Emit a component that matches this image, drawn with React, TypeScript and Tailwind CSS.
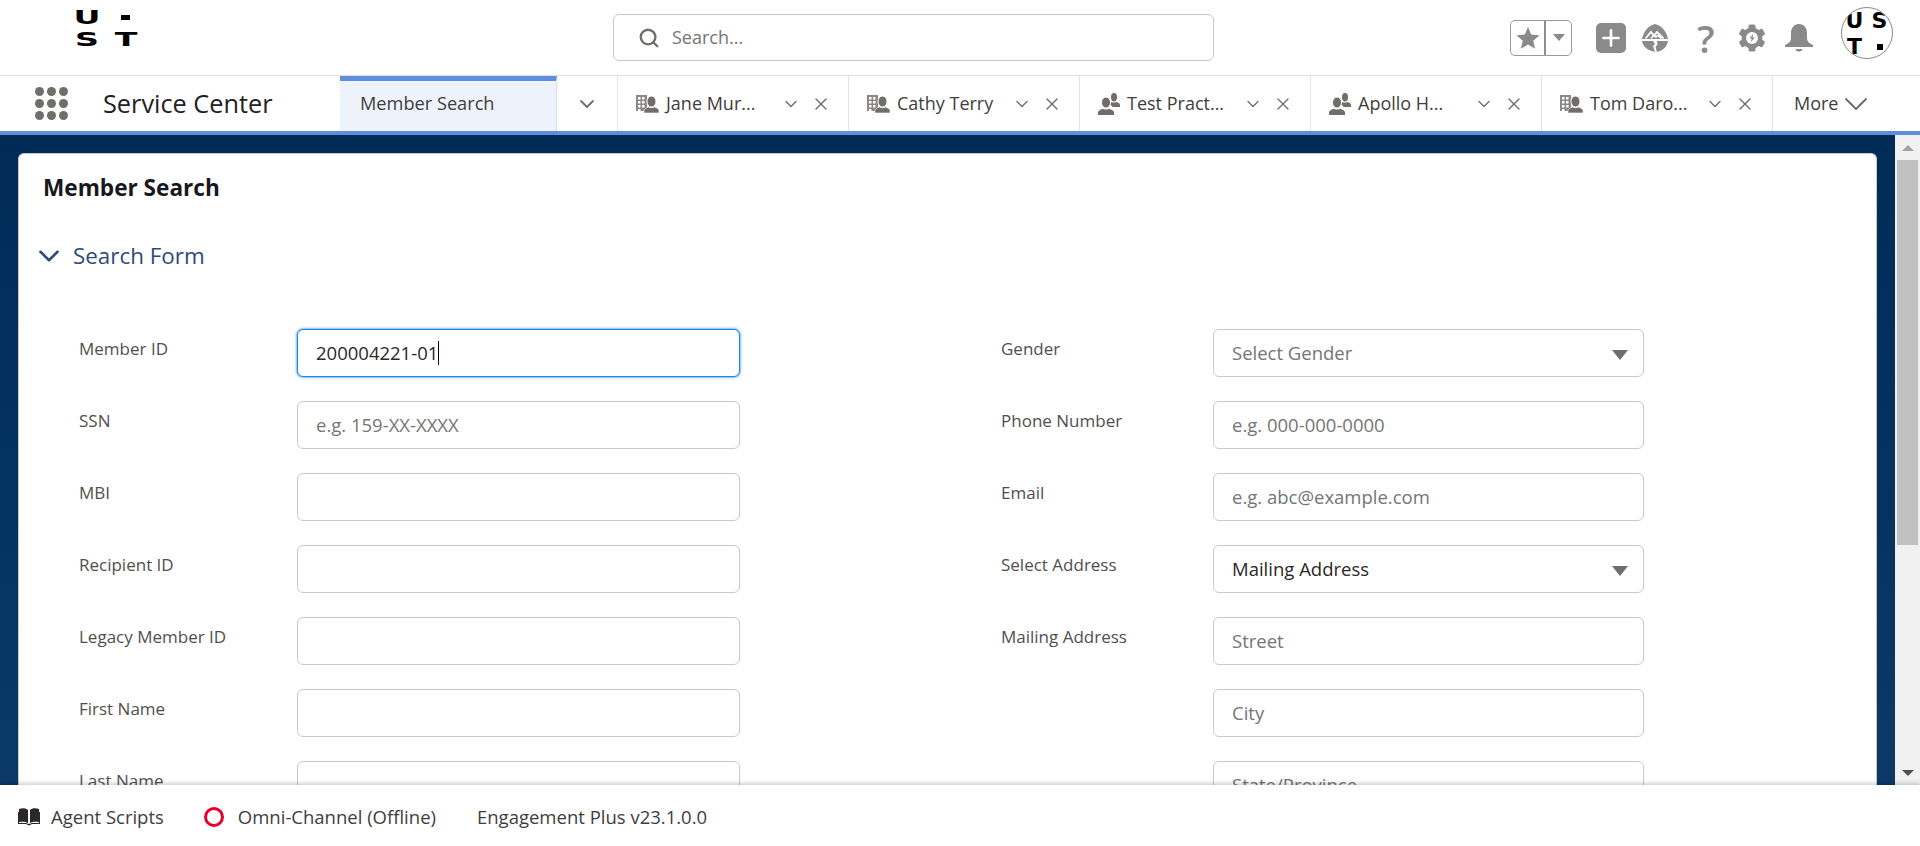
import React from 'react';
import { ChevronDown, X, Search, Plus } from 'lucide-react';

const FONT = "font-['Open_Sans',sans-serif]";

function AccountIcon() {
  return (
    <svg viewBox="0 0 23 18" className="w-[23px] h-[18px] shrink-0">
      <path d="M0 0h11v16H0z" fill="#8a8886" />
      <path d="M2 2h2.500v2.500H2zM6 2h2.500v2.500H6zM2 6h2.500v2.500H2zM6 6h2.500v2.500H6zM2 10h2.500v2.500H2zM6 10h2.500v2.500H6zM2 14h2.500v2H2z" fill="#fff" />
      <ellipse cx="15.500" cy="6.500" rx="4.500" ry="5.500" fill="#706e6b" stroke="#fff" />
      <path d="M8 18v-2.500c0-1.500 2-2.500 4.500-3.500.8 1 5.200 1 6 0 2.500 1 4.500 2 4.500 3.500V18z" fill="#706e6b" stroke="#fff" strokeWidth=".6" />
    </svg>
  );
}

function ContactIcon() {
  return (
    <svg viewBox="0 0 22 22" className="w-[22px] h-[22px] shrink-0" fill="#706e6b">
      <ellipse cx="16" cy="4.200" rx="3" ry="4.200" />
      <path d="M13.500 9c.8.700 4.200.700 5 0 1.800.6 3.500 1.400 3.500 3v2h-7.500c-.4-1.200-1.500-2-2.500-2.500z" />
      <ellipse cx="8" cy="9.500" rx="4.500" ry="5.500" stroke="#fff" />
      <path d="M0 22v-2.500c0-1.800 2.400-3 4.700-3.800.9 1 5.700 1 6.600 0 2.300.8 4.700 2 4.700 3.800V22z" />
    </svg>
  );
}

function Tab({ icon, label }: { icon: 'account' | 'contact'; label: string }) {
  return (
    <div className="w-[231px] h-full shrink-0 border-r border-[#e5e5e5] flex items-center pl-[18px] pr-[17px]">
      {icon === 'account' ? <AccountIcon /> : <ContactIcon />}
      <span className="ml-[7px] flex-1 text-[18px] text-[#3e3e3c] whitespace-nowrap">{label}</span>
      <ChevronDown className="w-5 h-5 text-[#706e6b] mr-[10px]" strokeWidth={1.6} />
      <X className="w-5 h-5 text-[#706e6b]" strokeWidth={1.6} />
    </div>
  );
}

function Field({ label, placeholder, value, select, focused, labelClass, inputClass }: {
  label?: string;
  placeholder?: string;
  value?: string;
  select?: boolean;
  focused?: boolean;
  labelClass: string;
  inputClass: string;
}) {
  return (
    <div className="flex h-12 mb-6">
      <div className={`${labelClass} text-[17px] leading-[40px] text-[#514f4d] shrink-0`}>{label}</div>
      <div className={`${inputClass} relative h-12 rounded-[6px] bg-white flex items-center pl-[18px] text-[18.5px] ${focused ? 'border border-[#1589ee] shadow-[0_0_3px_#0070d2]' : 'border border-[#c9c9c9]'}`}>
        {value && <span className="text-[#2b2826]">{value}</span>}
        {focused && <span className="w-px h-6 bg-black" />}
        {placeholder && <span className="text-[#757575]">{placeholder}</span>}
        {select && <span className="absolute right-[15px] top-[20px] w-0 h-0 border-x-[8px] border-x-transparent border-t-[10px] border-t-[#706e6b]" />}
      </div>
    </div>
  );
}

const LEFT_FIELDS = [
  { label: 'Member ID', value: '200004221-01', focused: true },
  { label: 'SSN', placeholder: 'e.g. 159-XX-XXXX' },
  { label: 'MBI' },
  { label: 'Recipient ID' },
  { label: 'Legacy Member ID' },
  { label: 'First Name' },
  { label: 'Last Name' },
];

const RIGHT_FIELDS = [
  { label: 'Gender', placeholder: 'Select Gender', select: true },
  { label: 'Phone Number', placeholder: 'e.g. 000-000-0000' },
  { label: 'Email', placeholder: 'e.g. abc@example.com' },
  { label: 'Select Address', value: 'Mailing Address', select: true },
  { label: 'Mailing Address', placeholder: 'Street' },
  { placeholder: 'City' },
  { placeholder: 'State/Province' },
];

export default function App() {
  return (
    <div className={`${FONT} w-[1920px] h-[846px] flex flex-col overflow-hidden bg-white`}>
      {/* global header */}
      <header className="h-[75px] shrink-0 flex items-center relative">
        <div className="w-[613px] h-full shrink-0 pl-[76px] pt-[6px]">
          <div className="grid grid-cols-[39px_22px] items-center font-['DejaVu_Sans',sans-serif] font-bold text-[19px] leading-[22px] text-black">
            <span className="w-[22px] text-center scale-x-[1.75]">U</span>
            <span className="w-[9px] h-[5px] ml-[6px] bg-black" />
            <span className="w-[22px] text-center scale-x-[1.75]">S</span>
            <span className="w-[22px] text-center scale-x-[1.75]">T</span>
          </div>
        </div>
        <div className="w-[601px] h-[47px] shrink-0 rounded-[6px] border border-[#c9c9c9] flex items-center pl-[24px]">
          <Search className="w-[22px] h-[22px] text-[#706e6b]" strokeWidth={2.6} />
          <span className="ml-[12px] text-[18px] text-[#757575]">Search...</span>
        </div>
        <div className="flex-1 flex items-center pl-[296px]">
          <div className="flex w-[62px] h-9 rounded-[5px] border border-[#9a9a9a]">
            <div className="w-[35px] flex items-center justify-center border-r-2 border-[#8f8f8f]">
              <svg viewBox="0 0 24 24" className="w-6 h-6" fill="#8a8a8a">
                <path d="M12 1l3.200 7.600 8.300.7-6.300 5.400 1.900 8.100L12 18.500l-7.100 4.300 1.900-8.100L.5 9.300l8.300-.7z" />
              </svg>
            </div>
            <div className="flex-1 flex items-center justify-center">
              <span className="w-0 h-0 border-x-[6px] border-x-transparent border-t-[7px] border-t-[#8a8a8a]" />
            </div>
          </div>
          <div className="ml-6 w-[30px] h-[30px] rounded-[5px] bg-[#8a8a8a] flex items-center justify-center">
            <Plus className="w-[26px] h-[26px] text-white" strokeWidth={2.4} />
          </div>
          <svg viewBox="0 0 30 30" className="ml-[14px] w-[30px] h-[30px]" fill="#8a8a8a">
            <path d="M15 1c6 1.500 11 6 13 15H2C4 7 9 2.500 15 1z" />
            <path d="M2 18h11l2 3-2 2 2 6C8 27.500 3 24 2 18zM17 18h11c-1 6-5 9.500-11 11l-1.500-5 2-2.500z" />
            <path d="M5.500 15.500l5.500-6.500 3 3.500 3-3.500 6.500 6.500M11 15.500l3-3.500 2 2 2-2 3 3.500" fill="none" stroke="#fff" strokeWidth="1.800" />
          </svg>
          <span className="ml-[21px] w-[30px] text-center text-[38px] leading-none font-semibold text-[#8a8a8a]">?</span>
          <svg viewBox="0 0 30 30" className="ml-[16px] w-[30px] h-[30px]" fill="#8a8a8a">
            <g>
              <circle cx="15" cy="15" r="10.500" />
              <rect x="11.500" y="1.500" width="7" height="27" rx="1.500" />
              <rect x="11.500" y="1.500" width="7" height="27" rx="1.500" transform="rotate(60 15 15)" />
              <rect x="11.500" y="1.500" width="7" height="27" rx="1.500" transform="rotate(120 15 15)" />
            </g>
            <circle cx="15" cy="15" r="6" fill="#fff" />
            <path d="M16.500 10.500l-4 5h2.300l-1 4 4-5h-2.300z" />
          </svg>
          <svg viewBox="0 0 30 30" className="ml-[17px] w-[30px] h-[30px]" fill="#8a8a8a">
            <path d="M15 1c5 0 8 4 8 9v5c0 4 3 5.500 6 7v2H1v-2c3-1.500 6-3 6-7v-5c0-5 3-9 8-9z" />
            <path d="M11.500 26h7c-.5 2-2 2.500-3.500 2.500s-3-.5-3.500-2.500z" />
          </svg>
          <div className="ml-[27px] mb-[9px] w-[52px] h-[52px] rounded-full border border-[#8a8a8a] overflow-hidden grid grid-cols-[25px_25px] grid-rows-[26px_26px] place-items-center font-['DejaVu_Sans',sans-serif] font-bold text-[22px] leading-[26px] text-black">
            <span>U</span>
            <span>S</span>
            <span>T</span>
            <span className="w-[6px] h-[6px] bg-black" />
          </div>
        </div>
      </header>

      {/* tab bar */}
      <nav className="h-[60px] shrink-0 border-t border-[#e0e0e0] border-b-4 border-b-[#5f8fdc] flex">
        <div className="w-[340px] shrink-0 flex items-center pl-[35px]">
          <div className="grid grid-cols-3 gap-[3px]">
            {[0, 1, 2, 3, 4, 5, 6, 7, 8].map((i) => (
              <span key={i} className="w-[9px] h-[9px] rounded-full bg-[#706e6b]" />
            ))}
          </div>
          <span className="ml-[35px] text-[25.300px] text-[#222] whitespace-nowrap">Service Center</span>
        </div>
        <div className="w-[217px] shrink-0 h-full bg-[#eef2fb] border-t-[5px] border-t-[#5f8fdc] border-r border-[#dddfe6] flex items-center pl-[20px] pb-[4px] text-[18.200px] text-[#3e3e3c]">
          Member Search
        </div>
        <div className="w-[61px] shrink-0 h-full border-r border-[#e5e5e5] flex items-center justify-center">
          <ChevronDown className="w-6 h-6 text-[#706e6b]" strokeWidth={1.8} />
        </div>
        <Tab icon="account" label="Jane Mur..." />
        <Tab icon="account" label="Cathy Terry" />
        <Tab icon="contact" label="Test Pract..." />
        <Tab icon="contact" label="Apollo H..." />
        <Tab icon="account" label="Tom Daro..." />
        <div className="flex items-center pl-[21px] text-[18px] text-[#3e3e3c]">
          More
          <ChevronDown className="-ml-[2px] w-10 h-10 text-[#706e6b]" strokeWidth={1.200} />
        </div>
      </nav>

      {/* workspace */}
      <main className="flex-1 min-h-0 flex overflow-hidden relative">
        <div className="flex-1 min-w-0 bg-gradient-to-b from-[#002b57] to-[#0b3a68] pl-[18px] pr-[18px] pt-[18px]">
          <div className="h-[800px] rounded-t-[6px] bg-white border border-[#c9c9c9] border-b-0">
            <h1 className="pl-[24px] pt-[19px] text-[22.600px] leading-[30px] font-bold text-[#16181d]">Member Search</h1>
            <div className="flex items-center pl-[13px] mt-[35px] h-[36px]">
              <ChevronDown className="w-[34px] h-[34px] text-[#2e4a78]" strokeWidth={1.800} />
              <span className="ml-[7px] text-[22.400px] text-[#2e4a78]">Search Form</span>
            </div>
            <div className="flex mt-[55px]">
              <div className="w-[982px] shrink-0 pl-[60px]">
                {LEFT_FIELDS.map((f, i) => (
                  <Field key={i} {...f} labelClass="w-[218px]" inputClass="w-[443px]" />
                ))}
              </div>
              <div>
                {RIGHT_FIELDS.map((f, i) => (
                  <Field key={i} {...f} labelClass="w-[212px]" inputClass="w-[431px]" />
                ))}
              </div>
            </div>
          </div>
        </div>
        {/* scrollbar */}
        <div className="w-[25px] shrink-0 bg-[#f1f1f1] flex flex-col items-center">
          <span className="mt-[10px] w-0 h-0 border-x-[6px] border-x-transparent border-b-[6px] border-b-[#a3a3a3]" />
          <div className="mt-[9px] w-[21px] h-[385px] bg-[#c1c1c1]" />
          <div className="flex-1" />
          <span className="mb-[9px] w-0 h-0 border-x-[6px] border-x-transparent border-t-[6px] border-t-[#505050]" />
        </div>
      </main>

      {/* utility bar */}
      <footer className="h-[61px] shrink-0 bg-white shadow-[0_-2px_4px_rgba(0,0,0,0.18)] relative flex items-center pl-[18px] pt-[2px] text-[18.500px] text-[#3e3e3c]">
        <svg viewBox="0 0 22 20" className="w-[22px] h-5" fill="#2b2826">
          <path d="M1 2c3-1 7-1 9 1v13c-2-1.500-6-1.500-9-1zM21 2c-3-1-7-1-9 1v13c2-1.500 6-1.500 9-1z" />
          <path d="M0 5v12h8l3 1.500 3-1.500h8V5h-1v11h-7l-3 1-3-1H1V5z" />
        </svg>
        <span className="ml-[11px] mr-[1px]">Agent Scripts</span>
        <span className="ml-[39px] w-[20px] h-[20px] rounded-full border-[3px] border-[#e4002b]" />
        <span className="ml-[14px]">Omni-Channel (Offline)</span>
        <span className="ml-[41px]">Engagement Plus v23.1.0.0</span>
      </footer>
    </div>
  );
}
